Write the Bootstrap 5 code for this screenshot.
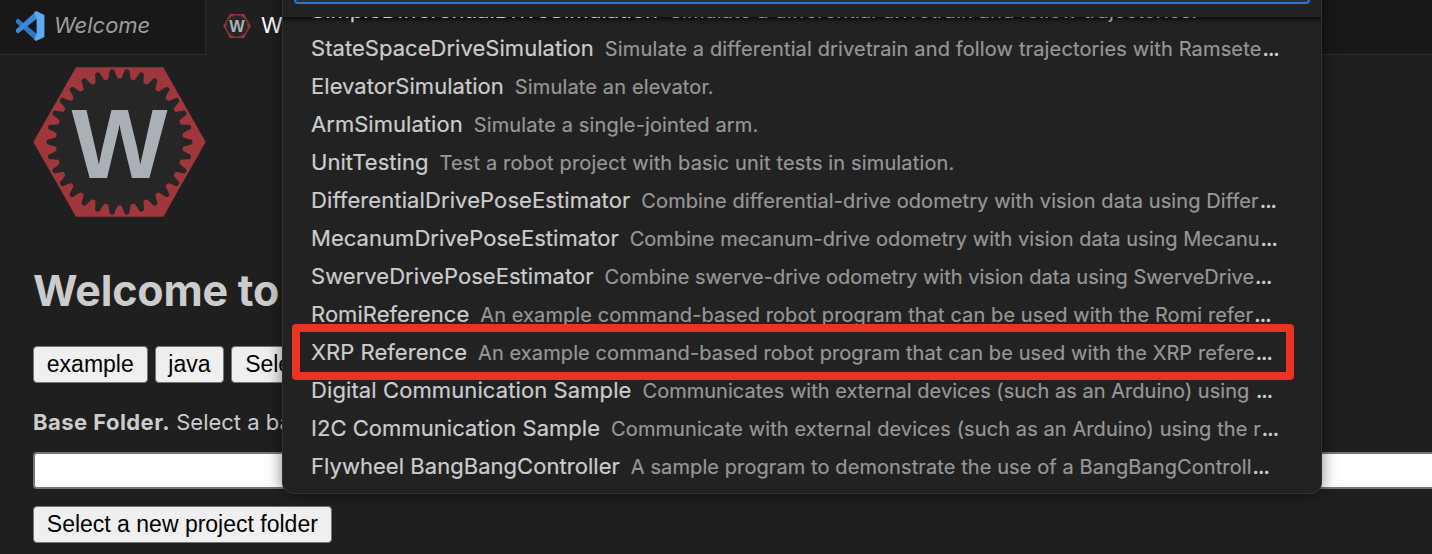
<!DOCTYPE html>
<html lang="en" data-bs-theme="dark">
<head>
<meta charset="utf-8">
<meta name="viewport" content="width=device-width, initial-scale=1">
<title>WPILib Project Creator</title>
<link href="https://cdn.jsdelivr.net/npm/bootstrap@5.3.0/dist/css/bootstrap.min.css" rel="stylesheet">
<style>
  body { background: #1f1f1f; color: #ccc; font-family: Inter, sans-serif; height: 554px; overflow: hidden; }
  .editor-tabs { height: 55px; background: #181818; font-size: 22px; }
  .editor-tab { height: 55px; border-bottom: 1px solid #2b2b2b; }
  .tab-idle { width: 206px; padding: 0 0 3px 15px; border-right: 1px solid #2b2b2b; color: #9d9d9d; font-style: italic; gap: 9px; }
  .tab-open { width: 300px; padding: 0 0 3px 17px; background: #1f1f1f; color: #fff; border-bottom-color: #1f1f1f; gap: 10px; }
  .page-body { padding: 12px 0 0 33px; }
  .page-title { color: #ccc; font-size: 43px; font-weight: 700; line-height: 52px; margin: 47px 0 30px; letter-spacing: -.2px; white-space: nowrap; }
  .btn-line { gap: 7px; }
  .native-btn { height: 37px; padding: 0 12.8px 1px; border: 1px solid #767676; border-radius: 4px; background: #efefef; color: #000; font: 23px/33px "Liberation Sans", sans-serif; white-space: nowrap; }
  .base-label { font-size: 22px; line-height: 30px; margin: 24px 0 15px; white-space: nowrap; }
  .base-label b { letter-spacing: .45px; }
  .native-input { height: 37px; border: 2px solid #767676; border-radius: 4px; background: #fff; width: 1420px; margin-bottom: 17px; }
  .picker { left: 282px; top: -20px; width: 1040px; height: 514px; background: #222; border: 1px solid #313131; border-radius: 11px; box-shadow: 0 0 16px rgba(0,0,0,.5); }
  .picker-head { height: 36px; padding: 0 11px; }
  .picker-input { height: 23px; background: #313131; border: 2px solid #2f74cc; border-radius: 4px; }
  .picker-list { height: 476px; padding-bottom: 8px; box-shadow: inset 0 6px 6px -5px #000; }
  .picker-row { height: 38px; flex: none; padding-left: 28px; white-space: nowrap; line-height: 38px; font-size: 22px; }
  .row-label { letter-spacing: .04px; -webkit-text-stroke: .2px; }
  .row-desc { font-size: 20px; color: #979797; margin-left: 11px; letter-spacing: .14px; -webkit-text-stroke: .2px; }
  .snug .row-desc { letter-spacing: .09px; }
  .snugger .row-desc { letter-spacing: .02px; }
  .roomy .row-label { letter-spacing: .1px; }
  .picker-row b { font-size: 19px; letter-spacing: -.9px; margin-left: 1px; }
  .callout { left: 292px; top: 324px; width: 1002px; height: 56px; border: 8px solid #ea3323; border-radius: 4px; }
</style>
</head>
<body class="position-relative">
<nav class="editor-tabs d-flex">
  <div class="editor-tab tab-idle d-flex align-items-center">
    <svg width="30" height="30" viewBox="0 0 100 100"><path d="M3 31L10 25L72 76V98L65 95L3 38Z" fill="#2f78c8"/><path d="M3 69L10 75L72 27V2L65 6L3 62Z" fill="#3f86d6"/><path d="M72 1L98 13V87L72 99Q67 100 64 95L72 74V27L64 5Q67 0 72 1Z" fill="#5eaaf0"/></svg>
    <span>Welcome</span>
  </div>
  <div class="editor-tab tab-open d-flex align-items-center">
    <svg width="28" height="26" viewBox="32 66 175 152"><use href="#wpi"/></svg>
    <span>WPILib</span>
  </div>
  <div class="editor-tab flex-grow-1"></div>
</nav>
<main class="page-body">
  <svg class="d-block" width="173" height="150" viewBox="33 67 173 150">
    <g id="wpi">
      <path d="M33.3 142L76 67.3H163.3L205.7 142L163.3 216.7H76Z" fill="#9f373c"/>
      <path id="gear" fill="#262626"/>
      <text x="71.5" y="178" textLength="96" lengthAdjust="spacingAndGlyphs" font-family="Liberation Sans, sans-serif" font-weight="700" font-size="98" fill="#abb0b7">W</text>
    </g>
  </svg>
  <h1 class="page-title">Welcome to WPILib</h1>
  <div class="btn-line d-flex">
    <button class="native-btn">example</button>
    <button class="native-btn">java</button>
    <button class="native-btn">Select a project</button>
  </div>
  <p class="base-label"><b>Base Folder.</b> Select a base folder</p>
  <div class="native-input"></div>
  <button class="native-btn">Select a new project folder</button>
</main>
<section class="picker position-absolute overflow-hidden">
  <div class="picker-head"><div class="picker-input"></div></div>
  <div class="picker-list d-flex flex-column justify-content-end overflow-hidden">
    <div class="picker-row"><span class="row-label">SimpleDifferentialDriveSimulation</span><span class="row-desc">Simulate a differential drivetrain and follow trajectories.</span></div>
    <div class="picker-row"><span class="row-label">StateSpaceDriveSimulation</span><span class="row-desc">Simulate a differential drivetrain and follow trajectories with Ramsete</span><b>...</b></div>
    <div class="picker-row"><span class="row-label">ElevatorSimulation</span><span class="row-desc">Simulate an elevator.</span></div>
    <div class="picker-row"><span class="row-label">ArmSimulation</span><span class="row-desc">Simulate a single-jointed arm.</span></div>
    <div class="picker-row"><span class="row-label">UnitTesting</span><span class="row-desc">Test a robot project with basic unit tests in simulation.</span></div>
    <div class="picker-row roomy snug"><span class="row-label">DifferentialDrivePoseEstimator</span><span class="row-desc">Combine differential-drive odometry with vision data using Differ</span><b>...</b></div>
    <div class="picker-row snugger"><span class="row-label">MecanumDrivePoseEstimator</span><span class="row-desc">Combine mecanum-drive odometry with vision data using Mecanu</span><b>...</b></div>
    <div class="picker-row snugger"><span class="row-label">SwerveDrivePoseEstimator</span><span class="row-desc">Combine swerve-drive odometry with vision data using SwerveDrive</span><b>...</b></div>
    <div class="picker-row snug"><span class="row-label">RomiReference</span><span class="row-desc">An example command-based robot program that can be used with the Romi refer</span><b>...</b></div>
    <div class="picker-row snug"><span class="row-label">XRP Reference</span><span class="row-desc">An example command-based robot program that can be used with the XRP refere</span><b>...</b></div>
    <div class="picker-row roomy snugger"><span class="row-label">Digital Communication Sample</span><span class="row-desc">Communicates with external devices (such as an Arduino) using </span><b>...</b></div>
    <div class="picker-row snug"><span class="row-label">I2C Communication Sample</span><span class="row-desc">Communicate with external devices (such as an Arduino) using the r</span><b>...</b></div>
    <div class="picker-row snug"><span class="row-label">Flywheel BangBangController</span><span class="row-desc">A sample program to demonstrate the use of a BangBangControll</span><b>...</b></div>
  </div>
</section>
<div class="callout position-absolute"></div>
<script src="https://cdn.jsdelivr.net/npm/bootstrap@5.3.0/dist/js/bootstrap.bundle.min.js"></script>
<script>
  // Thirty-tooth gear outline centred on the hexagon
  const at = (r, deg) => { const a = deg * Math.PI / 180; return (119.5 + r * Math.cos(a)).toFixed(2) + ' ' + (142 + r * Math.sin(a)).toFixed(2); };
  let d = '';
  for (let i = 0; i < 30; i++) {
    const t = i * 12;
    d += (i ? 'L' : 'M') + at(63.5, t - 4.3) + 'Q' + at(68, t - 2.6) + ' ' + at(72, t - 1.9) + 'Q' + at(74.3, t) + ' ' + at(72, t + 1.9) + 'Q' + at(68, t + 2.6) + ' ' + at(63.5, t + 4.3);
  }
  document.getElementById('gear').setAttribute('d', d + 'Z');
</script>
</body>
</html>
